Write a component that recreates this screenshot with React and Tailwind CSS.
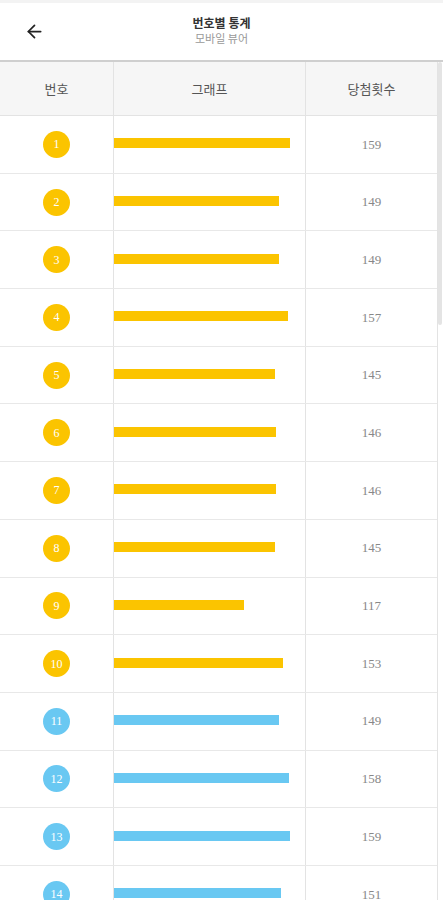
import { ArrowLeft } from 'lucide-react';

const COUNTS = [159, 149, 149, 157, 145, 146, 146, 145, 117, 153, 149, 158, 159, 151, 150];

const ballColor = (n) => {
  if (n <= 10) return 'bg-[#fbc400]';
  if (n <= 20) return 'bg-[#69c8f2]';
  if (n <= 30) return 'bg-[#ff7272]';
  if (n <= 40) return 'bg-[#aaaaaa]';
  return 'bg-[#b0d840]';
};

export default function App() {
  return (
    <div className="relative w-[443px] h-[900px] overflow-hidden bg-white font-['Noto_Sans','Noto_Sans_CJK_KR',sans-serif]">
      {/* Top bar */}
      <div className="h-[62px] border-t-[3px] border-t-[#f3f3f3] border-b-2 border-b-[#cfcfcf] flex items-center relative">
        <div className="pl-[24px] flex items-center">
          <ArrowLeft className="w-[21px] h-[21px] text-[#222]" strokeWidth={2} />
        </div>
        <div className="absolute inset-x-0 top-[13px] flex flex-col items-center">
          <span className="text-[12px] leading-[14px] font-semibold text-[#333] font-['Noto_Sans_CJK_KR',sans-serif]">번호별 통계</span>
          <span className="mt-[2px] text-[11px] leading-[13px] text-[#999] font-['Noto_Sans_CJK_KR',sans-serif]">모바일 뷰어</span>
        </div>
      </div>

      {/* Table */}
      <div className="w-[438px] border-r border-[#e3e3e3]">
        <div className="flex h-[54px] bg-[#f6f6f6] border-b border-[#e3e3e3] text-[13px] text-[#555] font-['Noto_Sans_CJK_KR',sans-serif]">
          <div className="w-[114px] border-r border-[#e3e3e3] flex items-center justify-center">번호</div>
          <div className="w-[192px] border-r border-[#e3e3e3] flex items-center justify-center">그래프</div>
          <div className="flex-1 flex items-center justify-center">당첨횟수</div>
        </div>
        {COUNTS.map((c, i) => {
          const n = i + 1;
          return (
            <div key={n} className="flex h-[57.7px] border-b border-[#e8e8e8]">
              <div className="w-[114px] border-r border-[#e3e3e3] flex items-center justify-center">
                <div className={`w-[27px] h-[27px] rounded-full ${ballColor(n)} flex items-center justify-center text-white text-[12px] font-['Liberation_Serif',serif]`}>
                  {n}
                </div>
              </div>
              <div className="w-[192px] border-r border-[#e3e3e3] flex items-center">
                <div className={`h-[10px] -mt-[2px] ${ballColor(n)}`} style={{ width: `${c * 1.107}px` }} />
              </div>
              <div className="flex-1 flex items-center justify-center text-[13px] text-[#888] font-['Liberation_Serif',serif]">
                {c}
              </div>
            </div>
          );
        })}
      </div>

      {/* Scrollbar */}
      <div className="absolute right-[1px] top-[62px] w-[4px] h-[263px] bg-[#e4e4e4] rounded-sm" />
    </div>
  );
}
